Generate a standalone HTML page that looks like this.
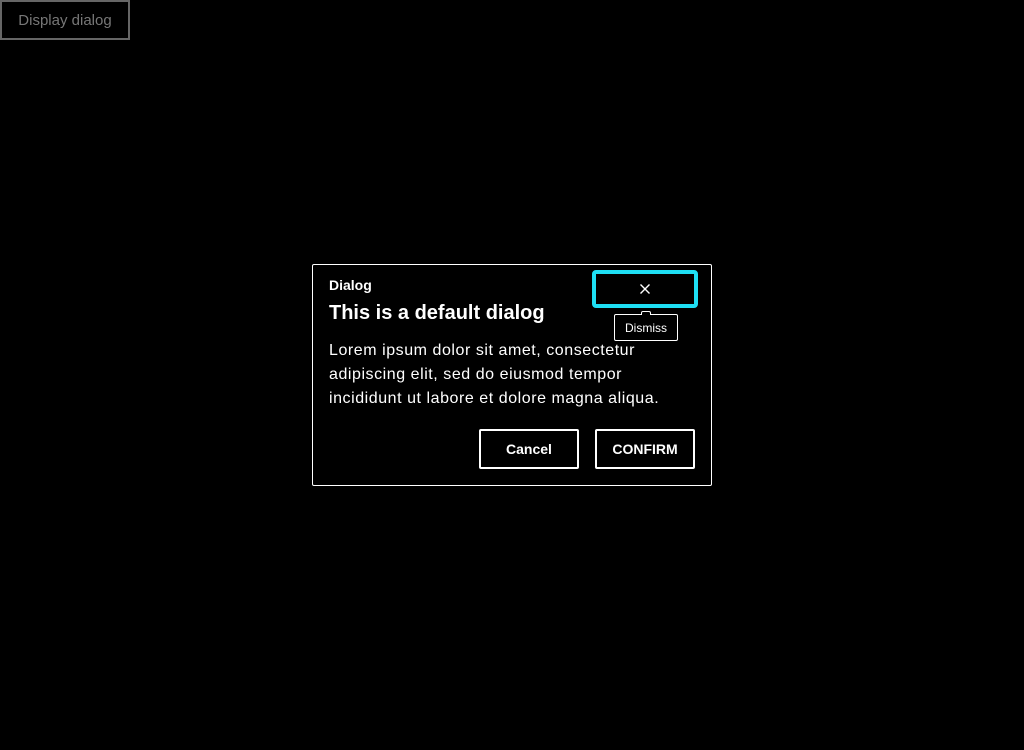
<!DOCTYPE html>
<html><head><style>
body{margin:0;width:1024px;height:750px;background:#000;position:relative;overflow:hidden;font-family:"Liberation Sans",sans-serif;color:#fff}
.abs{position:absolute;box-sizing:border-box}
#open{left:0;top:0;width:130px;height:40px;border:2px solid #666;color:#777;font-size:15px;display:flex;align-items:center;justify-content:center}
#dlg{left:312px;top:264px;width:400px;height:222px;border:1px solid #fff;border-radius:2px}
.btn{border:2px solid #fff;border-radius:2px;font-size:14px;font-weight:bold;display:flex;align-items:center;justify-content:center;width:100px;height:40px;top:429px}
</style></head><body>
<div class="abs" id="open">Display dialog</div>
<div class="abs" id="dlg"></div>
<div class="abs" style="left:329px;top:277px;font-size:14px;font-weight:bold">Dialog</div>
<div class="abs" style="left:329px;top:302px;font-size:20px;font-weight:bold">This is a default dialog</div>
<div class="abs" style="left:329px;top:339px;font-size:16px;line-height:24px;width:380px;letter-spacing:0.55px">Lorem ipsum dolor sit amet, consectetur<br>adipiscing elit, sed do eiusmod tempor<br>incididunt ut labore et dolore magna aliqua.</div>
<div class="abs" style="left:592px;top:270px;width:106px;height:38px;border:4px solid #1ee0f5;border-radius:4px;display:flex;align-items:center;justify-content:center">
<svg width="12" height="12" viewBox="0 0 12 12"><path d="M1.5 1.5L10.5 10.5M10.5 1.5L1.5 10.5" stroke="#fff" stroke-width="1.4"/></svg></div>
<div class="abs" style="left:614px;top:314px;width:64px;height:27px;border:1px solid #fff;border-radius:2px;background:#000;font-size:12px;display:flex;align-items:center;justify-content:center">Dismiss</div>
<div class="abs" style="left:641px;top:311px;width:10px;height:4px;border:1px solid #fff;border-bottom:none;background:#000;border-radius:2px 2px 0 0"></div>
<div class="abs btn" style="left:479px">Cancel</div>
<div class="abs btn" style="left:595px">CONFIRM</div>
</body></html>
